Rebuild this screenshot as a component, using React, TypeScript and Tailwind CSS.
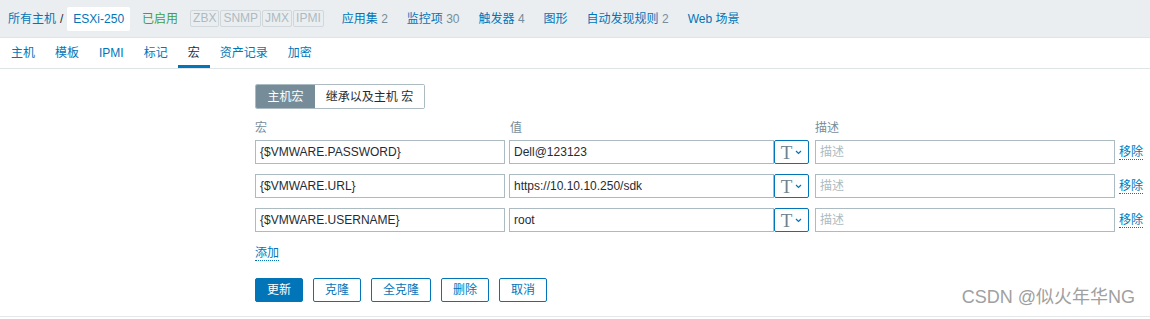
import React from "react";

const font = { fontFamily: '"Liberation Sans", Arial, "Noto Sans CJK SC", sans-serif' };

const navItems = [
  { label: "应用集", count: "2" },
  { label: "监控项", count: "30" },
  { label: "触发器", count: "4" },
  { label: "图形", count: "" },
  { label: "自动发现规则", count: "2" },
  { label: "Web 场景", count: "" },
];

const tabs = ["主机", "模板", "IPMI", "标记", "宏", "资产记录", "加密"];

const macros = [
  { name: "{$VMWARE.PASSWORD}", value: "Dell@123123" },
  { name: "{$VMWARE.URL}", value: "https://10.10.10.250/sdk" },
  { name: "{$VMWARE.USERNAME}", value: "root" },
];

function TypeButton() {
  return (
    <button
      type="button"
      className="flex h-[24px] w-[35px] items-center justify-center gap-[3px] rounded-[2px] border border-[#0275b8] bg-white"
    >
      <span
        className="text-[19px] leading-none text-[#6d8290]"
        style={{ fontFamily: '"Liberation Serif", "Times New Roman", serif' }}
      >
        T
      </span>
      <svg width="7" height="5" viewBox="0 0 7 5" className="mt-[1px]">
        <path d="M1 1 L3.5 3.5 L6 1" fill="none" stroke="#0275b8" strokeWidth="1.2" />
      </svg>
    </button>
  );
}

export default function App() {
  return (
    <div className="relative h-[319px] w-[1150px] overflow-hidden bg-white text-[12px] text-[#1f2c33]" style={font}>
      {/* host navigation */}
      <div className="flex h-[38px] items-center border-b border-[#dfe4e7] bg-[#ebeef0] pl-[8px]">
        <a className="text-[#0275b8]">所有主机</a>
        <span className="mx-[4px] text-[#1f2c33]">/</span>
        <span className="rounded-[2px] bg-white px-[6px] py-[3px] text-[#0275b8]">ESXi-250</span>
        <span className="ml-[12px] text-[#429e47]">已启用</span>
        <div className="ml-[12px] flex gap-[1px] text-[#acbbc2]">
          {["ZBX", "SNMP", "JMX", "IPMI"].map((s) => (
            <span key={s} className="rounded-[2px] border border-[#d0d8dc] bg-[#ebeef0] px-[2px] leading-[15px]">
              {s}
            </span>
          ))}
        </div>
        <div className="ml-[18px] flex gap-[19px]">
          {navItems.map((n) => (
            <span key={n.label}>
              <a className="text-[#0275b8]">{n.label}</a>
              {n.count && <span className="text-[#768d99]"> {n.count}</span>}
            </span>
          ))}
        </div>
      </div>

      {/* tabs */}
      <div className="flex h-[31px] border-b border-[#dfe4e7] pl-[1px]">
        {tabs.map((t) => (
          <div
            key={t}
            className={
              t === "宏"
                ? "flex items-center border-b-[3px] border-[#0275b8] px-[10px] pt-[3px] text-[#1f2c33]"
                : "flex items-center px-[10px] text-[#0275b8]"
            }
          >
            {t}
          </div>
        ))}
      </div>

      {/* form */}
      <div className="h-[248px] border-b border-[#e4e8ea] pl-[255px] pt-[15px]">
        <div className="flex h-[25px] w-[170px] overflow-hidden rounded-[2px] border border-[#acbbc2]">
          <div className="flex w-[59px] items-center justify-center bg-[#768d99] text-white">主机宏</div>
          <div className="flex flex-1 items-center justify-center bg-white">继承以及主机 宏</div>
        </div>

        <div className="mt-[11px] flex h-[16px] items-center text-[#768d99]">
          <span className="w-[255px]">宏</span>
          <span className="w-[305px]">值</span>
          <span>描述</span>
        </div>

        <div className="mt-[4px] flex flex-col gap-[10px]">
          {macros.map((m) => (
            <div key={m.name} className="flex items-center">
              <div className="flex h-[24px] w-[250px] items-center border border-[#acbbc2] px-[4px]">{m.name}</div>
              <div className="ml-[4px] flex">
                <div className="flex h-[24px] w-[265px] items-center border border-[#acbbc2] px-[4px]">{m.value}</div>
                <TypeButton />
              </div>
              <div className="ml-[6px] flex h-[24px] w-[300px] items-center border border-[#acbbc2] px-[4px] text-[#acbbc2]">
                描述
              </div>
              <a className="ml-[4px] border-b border-dotted border-[#0275b8] leading-[14px] text-[#0275b8]">移除</a>
            </div>
          ))}
        </div>

        <div className="mt-[14px] flex">
          <a className="border-b border-dotted border-[#0275b8] leading-[14px] text-[#0275b8]">添加</a>
        </div>

        <div className="mt-[17px] flex gap-[10px]">
          <button type="button" className="h-[24px] rounded-[2px] border border-[#0275b8] bg-[#0275b8] px-[11px] text-white">
            更新
          </button>
          {["克隆", "全克隆", "删除", "取消"].map((b) => (
            <button
              key={b}
              type="button"
              className="h-[24px] rounded-[2px] border border-[#0275b8] bg-white px-[11px] text-[#0275b8]"
            >
              {b}
            </button>
          ))}
        </div>
      </div>

      <div className="absolute bottom-[8px] right-[15px] text-[18px] text-[#a0a0a0]">CSDN @似火年华NG</div>
    </div>
  );
}
